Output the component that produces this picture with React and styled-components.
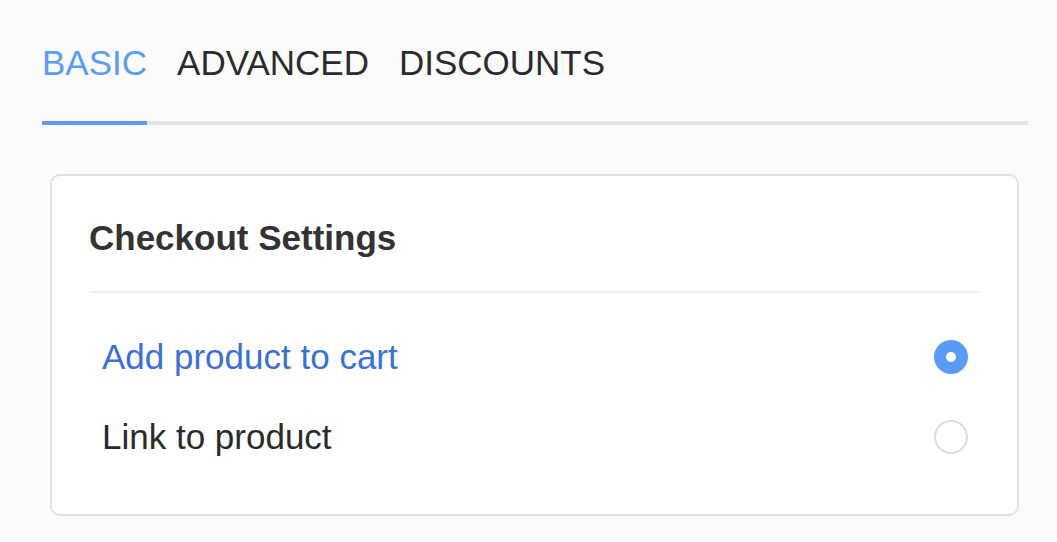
import React, { useState } from "react";
import styled, { createGlobalStyle } from "styled-components";

const GlobalStyle = createGlobalStyle`
    html, body {
        margin: 0;
        padding: 0;
        background: #fbfbfc;
        font-family: "Liberation Sans", Arial, sans-serif;
    }
`;

const Page = styled.div`
    padding: 43px 29px 0 42px;
`;

const TabBar = styled.div`
    display: flex;
    gap: 30px;
    border-bottom: 4px solid #e3e4ea;
`;

const Tab = styled.div`
    font-size: 35px;
    line-height: 40px;
    padding-bottom: 38px;
    margin-bottom: -4px;
    color: ${p => (p.$active ? "#5c9cf5" : "#2b2b2b")};
    border-bottom: 4px solid ${p => (p.$active ? "#5c9cf5" : "transparent")};
    cursor: pointer;
`;

const Card = styled.div`
    margin: 49px 9px 0 8px;
    background: #fff;
    border: 2px solid #e2e2e2;
    border-radius: 10px;
    padding: 42px 36px 37px 37px;
`;

const Title = styled.div`
    font-size: 35px;
    line-height: 40px;
    font-weight: 700;
    color: #333;
`;

const Divider = styled.div`
    height: 2px;
    background: #eeeeee;
    margin: 33px 0 24px;
`;

const Option = styled.label`
    display: flex;
    align-items: center;
    justify-content: space-between;
    height: 80px;
    padding: 0 13px;
    font-size: 35px;
    color: ${p => (p.$checked ? "#3a70d9" : "#2b2b2b")};
    cursor: pointer;
`;

const Radio = styled.span`
    width: 34px;
    height: 34px;
    box-sizing: border-box;
    border-radius: 50%;
    display: flex;
    align-items: center;
    justify-content: center;
    background: ${p => (p.$checked ? "#5a9bf6" : "#fff")};
    border: ${p => (p.$checked ? "none" : "2px solid #dcdce4")};

    &::after {
        content: "";
        display: ${p => (p.$checked ? "block" : "none")};
        width: 10px;
        height: 10px;
        border-radius: 50%;
        background: #fff;
    }
`;

const tabs = ["BASIC", "ADVANCED", "DISCOUNTS"];
const options = ["Add product to cart", "Link to product"];

export default function App() {
    const [tab, setTab] = useState(0);
    const [choice, setChoice] = useState(0);

    return <Page>
        <GlobalStyle />
        <TabBar>
            {tabs.map((t, i) => (
                <Tab key={t} $active={tab === i} onClick={() => setTab(i)}>{t}</Tab>
            ))}
        </TabBar>
        <Card>
            <Title>Checkout Settings</Title>
            <Divider />
            {options.map((o, i) => (
                <Option key={o} $checked={choice === i} onClick={() => setChoice(i)}>
                    {o}
                    <Radio $checked={choice === i} />
                </Option>
            ))}
        </Card>
    </Page>;
}
